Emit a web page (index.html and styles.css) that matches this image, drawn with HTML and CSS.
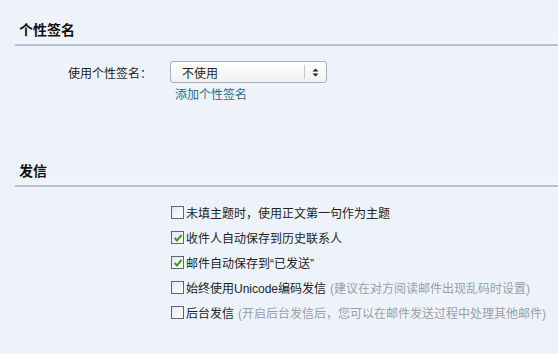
FILE: index.html
```html
<!DOCTYPE html>
<html>
<head>
  <meta charset="UTF-8">
  <title>设置</title>
  <link rel="stylesheet" href="styles.css">
</head>
<body>
  <!-- 个性签名 -->
  <div class="bloque">
    <div class="titulo"><h2>个性签名</h2></div>
    <div class="fila">
      <span class="etiqueta">使用个性签名：</span>
      <div class="selector">
        <span class="valor">不使用</span>
        <span class="flechas">
          <svg width="7" height="9" viewBox="0 0 7 9"><path d="M3.5 0.5 L6.5 3.5 L0.5 3.5 Z M3.5 8.5 L6.5 5.5 L0.5 5.5 Z" fill="#222"/></svg>
        </span>
      </div>
    </div>
    <a class="enlace" href="#">添加个性签名</a>
  </div>

  <!-- 发信 -->
  <div class="bloque bloque-envio">
    <div class="titulo"><h2>发信</h2></div>
    <ul class="opciones">
      <li><span class="casilla"></span>未填主题时，使用正文第一句作为主题</li>
      <li><span class="casilla marcada"><svg width="10" height="10" viewBox="0 0 10 10"><path d="M1.5 5 L4 7.5 L8.5 2" fill="none" stroke="#3a9a2a" stroke-width="2"/></svg></span>收件人自动保存到历史联系人</li>
      <li><span class="casilla marcada"><svg width="10" height="10" viewBox="0 0 10 10"><path d="M1.5 5 L4 7.5 L8.5 2" fill="none" stroke="#3a9a2a" stroke-width="2"/></svg></span>邮件自动保存到“已发送”</li>
      <li><span class="casilla"></span>始终使用Unicode编码发信<span class="nota">(建议在对方阅读邮件出现乱码时设置)</span></li>
      <li><span class="casilla"></span>后台发信<span class="nota">(开启后台发信后，您可以在邮件发送过程中处理其他邮件)</span></li>
    </ul>
  </div>
</body>
</html>
```

FILE: styles.css
```css
body {
  margin: 0;
  padding: 0;
  background-color: #eef3fb;
  font-family: "Liberation Sans", "Noto Sans CJK SC", sans-serif;
  font-size: 12px;
  color: #222;
}

.bloque {
  padding-top: 16px;
}

.bloque-envio {
  padding-top: 53px;
}

.titulo {
  margin-left: 15px;
  padding-left: 4px;
  height: 28px;
  border-bottom: 2px solid #b4c2d8;
  background: linear-gradient(#eef3fb 60%, #f2f4f7);
}

.titulo h2 {
  margin: 0;
  font-size: 14px;
  font-weight: bold;
  line-height: 28px;
  color: #111;
}

.fila {
  display: flex;
  align-items: center;
  gap: 18px;
  margin-top: 15px;
}

.etiqueta {
  width: 152px;
  text-align: right;
}

.selector {
  display: flex;
  align-items: center;
  width: 155px;
  height: 20px;
  border: 1px solid #a9b0b8;
  border-radius: 3px;
  background: linear-gradient(#ffffff, #f1f1f1);
}

.valor {
  flex: 1;
  padding-left: 11px;
}

.flechas {
  display: flex;
  align-items: center;
  justify-content: center;
  width: 21px;
  height: 14px;
  border-left: 1px solid #c8c8c8;
}

.enlace {
  display: block;
  margin: 3px 0 0 175px;
  line-height: 18px;
  color: #2a6a8c;
  text-decoration: none;
}

.opciones {
  list-style: none;
  margin: 13px 0 0 0;
  padding: 0 0 0 171px;
}

.opciones li {
  display: flex;
  align-items: center;
  height: 25px;
  white-space: nowrap;
}

.casilla {
  display: flex;
  align-items: center;
  justify-content: center;
  box-sizing: border-box;
  width: 13px;
  height: 13px;
  margin-right: 2px;
  border: 1px solid #56687c;
  background: linear-gradient(135deg, #e6e8ea, #ffffff);
}

.nota {
  margin-left: 4px;
  color: #9a9ea4;
}
```
